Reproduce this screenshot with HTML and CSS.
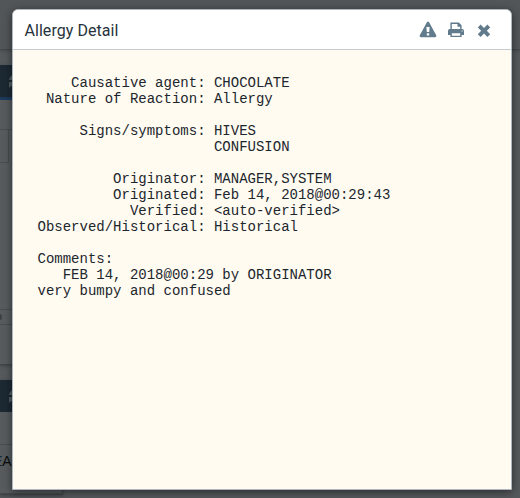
FILE: index.html
```html
<!DOCTYPE html>
<html lang="en">
<head>
<meta charset="utf-8">
<title>Allergy Detail</title>
<link rel="stylesheet" href="styles.css">
</head>
<body>
<div class="page">
  <header class="topbar"></header>
  <main class="column">
    <section class="panel">
      <div class="panel-head accent"><svg class="refresh" viewBox="0 0 14 14"><path d="M1 6a6 6 0 0 1 10-4l2-2v6H7l2-2a3 3 0 0 0-5 2ZM1 14V8h6l-2 2a3 3 0 0 0 5-2h3a6 6 0 0 1-10 4Z"/></svg></div>
      <div class="tools"></div>
      <div class="row"></div>
      <div class="list"></div>
      <div class="scrollbar"><i></i></div>
      <div class="panel-foot"></div>
    </section>
    <section class="panel">
      <div class="panel-head"><svg class="refresh" viewBox="0 0 14 14"><path d="M1 6a6 6 0 0 1 10-4l2-2v6H7l2-2a3 3 0 0 0-5 2ZM1 14V8h6l-2 2a3 3 0 0 0 5-2h3a6 6 0 0 1-10 4Z"/></svg></div>
      <div class="tools short"></div>
      <div class="entry"><span>E</span>A</div>
    </section>
  </main>
</div>
<div class="dialog" role="dialog">
  <div class="dialog-head">
    <h1>Allergy Detail</h1>
    <svg class="icon" viewBox="0 0 18 18"><path fill-rule="evenodd" d="M7.9 1.2Q9 -.2 10.1 1.2L17.2 14.3Q17.8 16 16 16.3H2Q.2 16 .8 14.3ZM7.4 6.1 7.8 11.1H10.2L10.6 6.1ZM7.8 12.2V14.4H10.2V12.2Z"/></svg>
    <svg class="icon" viewBox="0 0 18 18"><path fill-rule="evenodd" d="M3.4 1.5H11.8L14.6 4.3V8H15.2Q17 8 17 9.8V14H14.6V16H3.4V14H1V9.8Q1 8 2.8 8H3.4ZM4.8 2.9V8H13.2V5.7H10.5V2.9ZM4.8 12.3V14.7H13.2V12.3ZM14.6 9.4V10.5H15.7V9.4Z"/></svg>
    <svg class="icon" viewBox="0 0 18 18"><path d="M5.6 3.6 9 7 12.4 3.6 15.2 6.4 11.8 9.8 15.2 13.2 12.4 16 9 12.6 5.6 16 2.8 13.2 6.2 9.8 2.8 6.4Z"/></svg>
  </div>
<pre class="detail">    Causative agent: CHOCOLATE
 Nature of Reaction: Allergy

     Signs/symptoms: HIVES
                     CONFUSION

         Originator: MANAGER,SYSTEM
         Originated: Feb 14, 2018@00:29:43
           Verified: &lt;auto-verified&gt;
Observed/Historical: Historical

Comments:
   FEB 14, 2018@00:29 by ORIGINATOR
very bumpy and confused</pre>
</div>
</body>
</html>
```
FILE: styles.css
```css
* { box-sizing: border-box; }
body {
  margin: 0;
  height: 498px;
  overflow: hidden;
  background: #55595c;
  font-family: Roboto, "Liberation Sans", sans-serif;
}
.page { height: 498px; overflow: hidden; }
.topbar {
  height: 50px;
  background: #525659;
  border-bottom: 1px solid #43484b;
  box-shadow: 0 1px 3px #45494c;
}
.column { width: 63px; padding-top: 15px; display: grid; gap: 15px; }
.panel {
  background: #575b5e;
  border-right: 1px solid #44494c;
  border-bottom: 1px solid #414548;
  box-shadow: 0 1px 3px #3f4346;
}
.panel-head { height: 32px; background: #1c2832; padding: 9px 0 0 8px; }
.panel-head.accent { height: 35px; border-bottom: 3px solid #1d3a5b; }
.refresh { display: block; width: 14px; height: 14px; fill: #535c62; }
.tools { height: 30px; border-bottom: 1px solid #484d50; }
.tools.short { height: 33px; }
.row { width: 9px; height: 33px; border-right: 1px solid #484d50; border-bottom: 1px solid #484d50; }
.list { height: 147px; border-bottom: 1px solid #484d50; }
.scrollbar { height: 15px; padding-top: 4px; border-bottom: 1px solid #484d50; }
.scrollbar i { display: block; width: 2px; height: 6px; background: #3c4145; border-radius: 0 3px 3px 0; }
.panel-foot { height: 39px; }
.entry {
  height: 49px;
  border-bottom: 1px solid #44494c;
  font: 14px/33px "Liberation Sans", sans-serif;
  color: #090b0d;
  text-indent: -7px;
  white-space: nowrap;
}
.entry span { color: #0b2438; }
.dialog {
  position: absolute;
  left: 12px;
  top: 9px;
  width: 500px;
  height: 481px;
  display: flex;
  flex-direction: column;
  overflow: hidden;
  background: #fffbf0;
  border: 1px solid #aeb7be;
  border-radius: 6px 6px 0 0;
  box-shadow: 0 2px 8px rgba(0, 0, 0, .5);
}
.dialog-head {
  height: 40px;
  flex: none;
  display: flex;
  align-items: center;
  gap: 10px;
  padding: 0 18px 0 12px;
  background: #fff;
  border-bottom: 1px solid #c5cbd0;
}
h1 { flex: 1; margin: 3px 0 0 -0.5px; font-size: 16px; line-height: 20px; font-weight: 400; letter-spacing: .05px; color: #27333c; }
.icon { width: 18px; height: 18px; fill: #617b8c; }
.detail {
  margin: 0;
  padding: 25px 24.5px;
  font: 14px/16px "Liberation Mono", monospace;
  color: #1c262e;
}
```
